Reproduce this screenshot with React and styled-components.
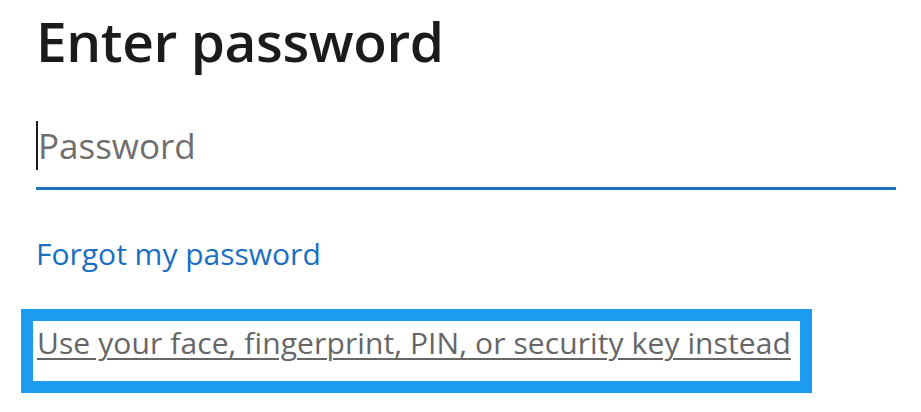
import styled, { createGlobalStyle } from "styled-components";

const GlobalStyle = createGlobalStyle`
  body {
    margin: 0;
    background: #ffffff;
    font-family: "Open Sans", "Noto Sans", sans-serif;
  }
`;

const Page = styled.main`
  width: 921px;
  height: 412px;
  overflow: hidden;
  padding: 9px 25px 0 36px;
  box-sizing: border-box;
  display: flex;
  flex-direction: column;
`;

const Title = styled.h1`
  margin: 0;
  font-size: 55px;
  line-height: 64px;
  font-weight: 600;
  color: #1b1b1b;
  letter-spacing: -0.4px;
`;

const Field = styled.label`
  display: flex;
  align-items: center;
  margin-top: 31px;
  height: 83px;
  border-bottom: 3px solid #1f71c4;
`;

const Caret = styled.span`
  width: 2px;
  height: 49px;
  background: #1b1b1b;
`;

const Input = styled.input`
  flex: 1;
  border: 0;
  outline: none;
  padding: 0;
  font-family: inherit;
  font-size: 35px;
  color: #1b1b1b;
  background: transparent;

  &::placeholder {
    color: #6f6f6f;
  }
`;

const Link = styled.a`
  display: inline-block;
  color: ${(p) => p.$color || "#1a6fc2"};
  font-size: 30px;
  line-height: 40px;
  letter-spacing: ${(p) => p.$spacing || "0"};
  text-decoration: ${(p) => (p.$underline ? "underline" : "none")};
  text-underline-offset: 4px;
  text-decoration-thickness: 2px;
`;

const ForgotRow = styled.div`
  margin-top: 44px;
`;

const FocusBox = styled.div`
  align-self: flex-start;
  margin: 35px 0 0 -15px;
  width: 791px;
  height: 84px;
  box-sizing: border-box;
  border: 12px solid #1b9cf0;
  padding: 2px 0 0 4px;
`;

export default function App() {
  return (
    <>
      <GlobalStyle />
      <Page>
        <Title>Enter password</Title>
        <Field>
          <Caret />
          <Input type="password" placeholder="Password" />
        </Field>
        <ForgotRow>
          <Link href="#">Forgot my password</Link>
        </ForgotRow>
        <FocusBox>
          <Link href="#" $color="#666666" $spacing="0.1px" $underline>
            Use your face, fingerprint, PIN, or security key instead
          </Link>
        </FocusBox>
      </Page>
    </>
  );
}
